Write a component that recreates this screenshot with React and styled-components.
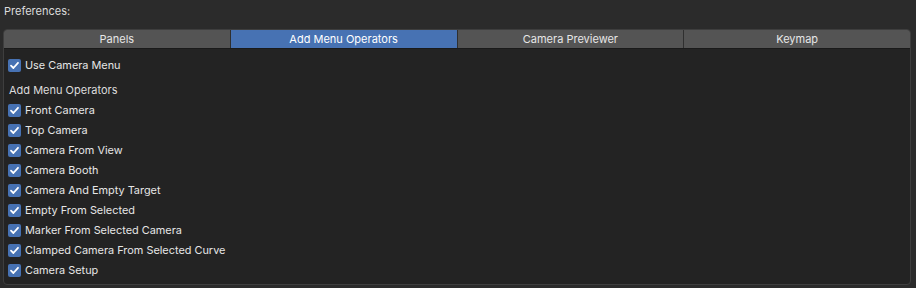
import React from 'react';
import styled, { createGlobalStyle } from 'styled-components';

const Global = createGlobalStyle`
  html, body {
    margin: 0;
    background: #2b2b2b;
    color: #e0e0e0;
    font-family: Inter, "DejaVu Sans", sans-serif;
    font-size: 11px;
  }
`;

const Page = styled.div`
  width: 916px;
  height: 288px;
  padding: 3px 5px 0 3px;
  box-sizing: border-box;
`;

const Heading = styled.div`
  height: 18px;
  line-height: 16px;
  padding-left: 1px;
  margin-bottom: 8px;
  color: #dcdcdc;
`;

const Box = styled.div`
  border: 1px solid #3e3e3e;
  border-radius: 4px;
  background: #232323;
  height: 256px;
  box-sizing: border-box;
  overflow: hidden;
`;

const Tabs = styled.div`
  display: grid;
  grid-template-columns: repeat(4, 1fr);
  gap: 1px;
  background: #2f2f2f;
  border-bottom: 1px solid #1a1a1a;
`;

const Tab = styled.div`
  height: 18px;
  line-height: 18px;
  text-align: center;
  background: ${p => (p.$active ? '#4772b3' : '#545454')};
  color: ${p => (p.$active ? '#ffffff' : '#e6e6e6')};
`;

const Content = styled.div`
  display: flex;
  flex-direction: column;
  padding: 6px 5px 0 4px;
`;

const Row = styled.label`
  display: flex;
  align-items: center;
  gap: 4px;
  height: 20px;
  font-size: 10.9px;
  color: #e6e6e6;
`;

const Check = styled.span`
  width: 13px;
  height: 13px;
  border-radius: 2px;
  background: #4772b3;
  display: flex;
  align-items: center;
  justify-content: center;
`;

const Label = styled.div`
  height: 20px;
  line-height: 20px;
  margin-top: 5px;
  padding-left: 1px;
  color: #dcdcdc;
`;

const Tick = () => (
  <svg width="11" height="11" viewBox="0 0 11 11">
    <path d="M2 5.6 L4.4 8 L9 2.8" fill="none" stroke="#fff" strokeWidth="1.8" strokeLinecap="round" strokeLinejoin="round" />
  </svg>
);

const CheckRow = ({ children }) => (
  <Row>
    <Check><Tick /></Check>
    {children}
  </Row>
);

const operators = [
  'Front Camera',
  'Top Camera',
  'Camera From View',
  'Camera Booth',
  'Camera And Empty Target',
  'Empty From Selected',
  'Marker From Selected Camera',
  'Clamped Camera From Selected Curve',
  'Camera Setup',
];

const tabs = ['Panels', 'Add Menu Operators', 'Camera Previewer', 'Keymap'];

export default function App() {
  return (
    <Page>
      <Global />
      <Heading>Preferences:</Heading>
      <Box>
        <Tabs>
          {tabs.map(t => (
            <Tab key={t} $active={t === 'Add Menu Operators'}>{t}</Tab>
          ))}
        </Tabs>
        <Content>
          <CheckRow>Use Camera Menu</CheckRow>
          <Label>Add Menu Operators</Label>
          {operators.map(o => (
            <CheckRow key={o}>{o}</CheckRow>
          ))}
        </Content>
      </Box>
    </Page>
  );
}
